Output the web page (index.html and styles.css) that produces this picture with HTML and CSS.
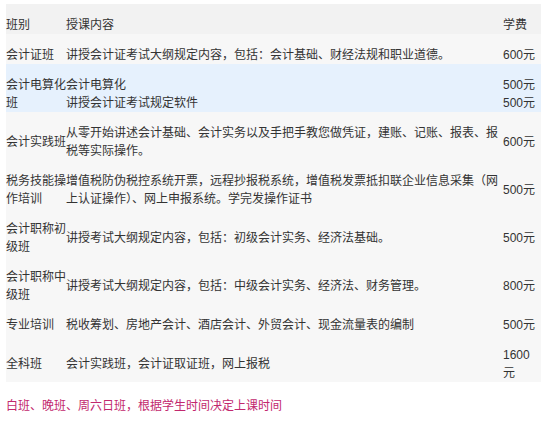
FILE: index.html
```html
<!DOCTYPE html>
<html lang="zh-CN">
<head>
<meta charset="utf-8">
<title>课程</title>
<link rel="stylesheet" href="styles.css">
</head>
<body>
<div class="page">
  <table class="course-table">
    <colgroup>
      <col class="c-name">
      <col class="c-desc">
      <col class="c-fee">
    </colgroup>
    <thead>
      <tr class="head-row">
        <th>班别</th>
        <th>授课内容</th>
        <th>学费</th>
      </tr>
    </thead>
    <tbody>
      <tr>
        <td>会计证班</td>
        <td>讲授会计证考试大纲规定内容，包括：会计基础、财经法规和职业道德。</td>
        <td>600元</td>
      </tr>
      <tr class="hl">
        <td>会计电算化班</td>
        <td>会计电算化<br>讲授会计证考试规定软件</td>
        <td>500元<br>500元</td>
      </tr>
      <tr>
        <td>会计实践班</td>
        <td>从零开始讲述会计基础、会计实务以及手把手教您做凭证，建账、记账、报表、报税等实际操作。</td>
        <td>600元</td>
      </tr>
      <tr>
        <td>税务技能操作培训</td>
        <td>增值税防伪税控系统开票，远程抄报税系统，增值税发票抵扣联企业信息采集（网上认证操作）、网上申报系统。学完发操作证书</td>
        <td>500元</td>
      </tr>
      <tr>
        <td>会计职称初级班</td>
        <td>讲授考试大纲规定内容，包括：初级会计实务、经济法基础。</td>
        <td>500元</td>
      </tr>
      <tr>
        <td>会计职称中级班</td>
        <td>讲授考试大纲规定内容，包括：中级会计实务、经济法、财务管理。</td>
        <td>800元</td>
      </tr>
      <tr>
        <td>专业培训</td>
        <td>税收筹划、房地产会计、酒店会计、外贸会计、现金流量表的编制</td>
        <td>500元</td>
      </tr>
      <tr>
        <td>全科班</td>
        <td>会计实践班，会计证取证班，网上报税</td>
        <td>1600元</td>
      </tr>
    </tbody>
  </table>
  <p class="note">白班、晚班、周六日班，根据学生时间决定上课时间</p>
</div>
</body>
</html>
```

FILE: styles.css
```css
html, body {
  margin: 0;
  padding: 0;
  background: #ffffff;
}

body {
  font-family: "Liberation Sans", Arial, "Noto Sans CJK SC", sans-serif;
  font-size: 12px;
  color: #333333;
}

.page {
  padding: 4px 6px 0 6px;
}

.course-table {
  width: 535px;
  table-layout: fixed;
  border-collapse: collapse;
  border-spacing: 0;
}

.c-name { width: 60px; }
.c-desc { width: 437px; }
.c-fee { width: 38px; }

.course-table th,
.course-table td {
  padding: 12px 0 0 0;
  line-height: 18px;
  text-align: left;
  font-weight: normal;
  vertical-align: middle;
  word-break: break-all;
}

.head-row {
  background: #f2f2f2;
}

.course-table tbody tr {
  background: #f7f7f7;
}

.course-table tbody tr.hl {
  background: #e6f1fd;
}

.note {
  margin: 15px 0 0 0;
  line-height: 18px;
  color: #c2286e;
}
```
